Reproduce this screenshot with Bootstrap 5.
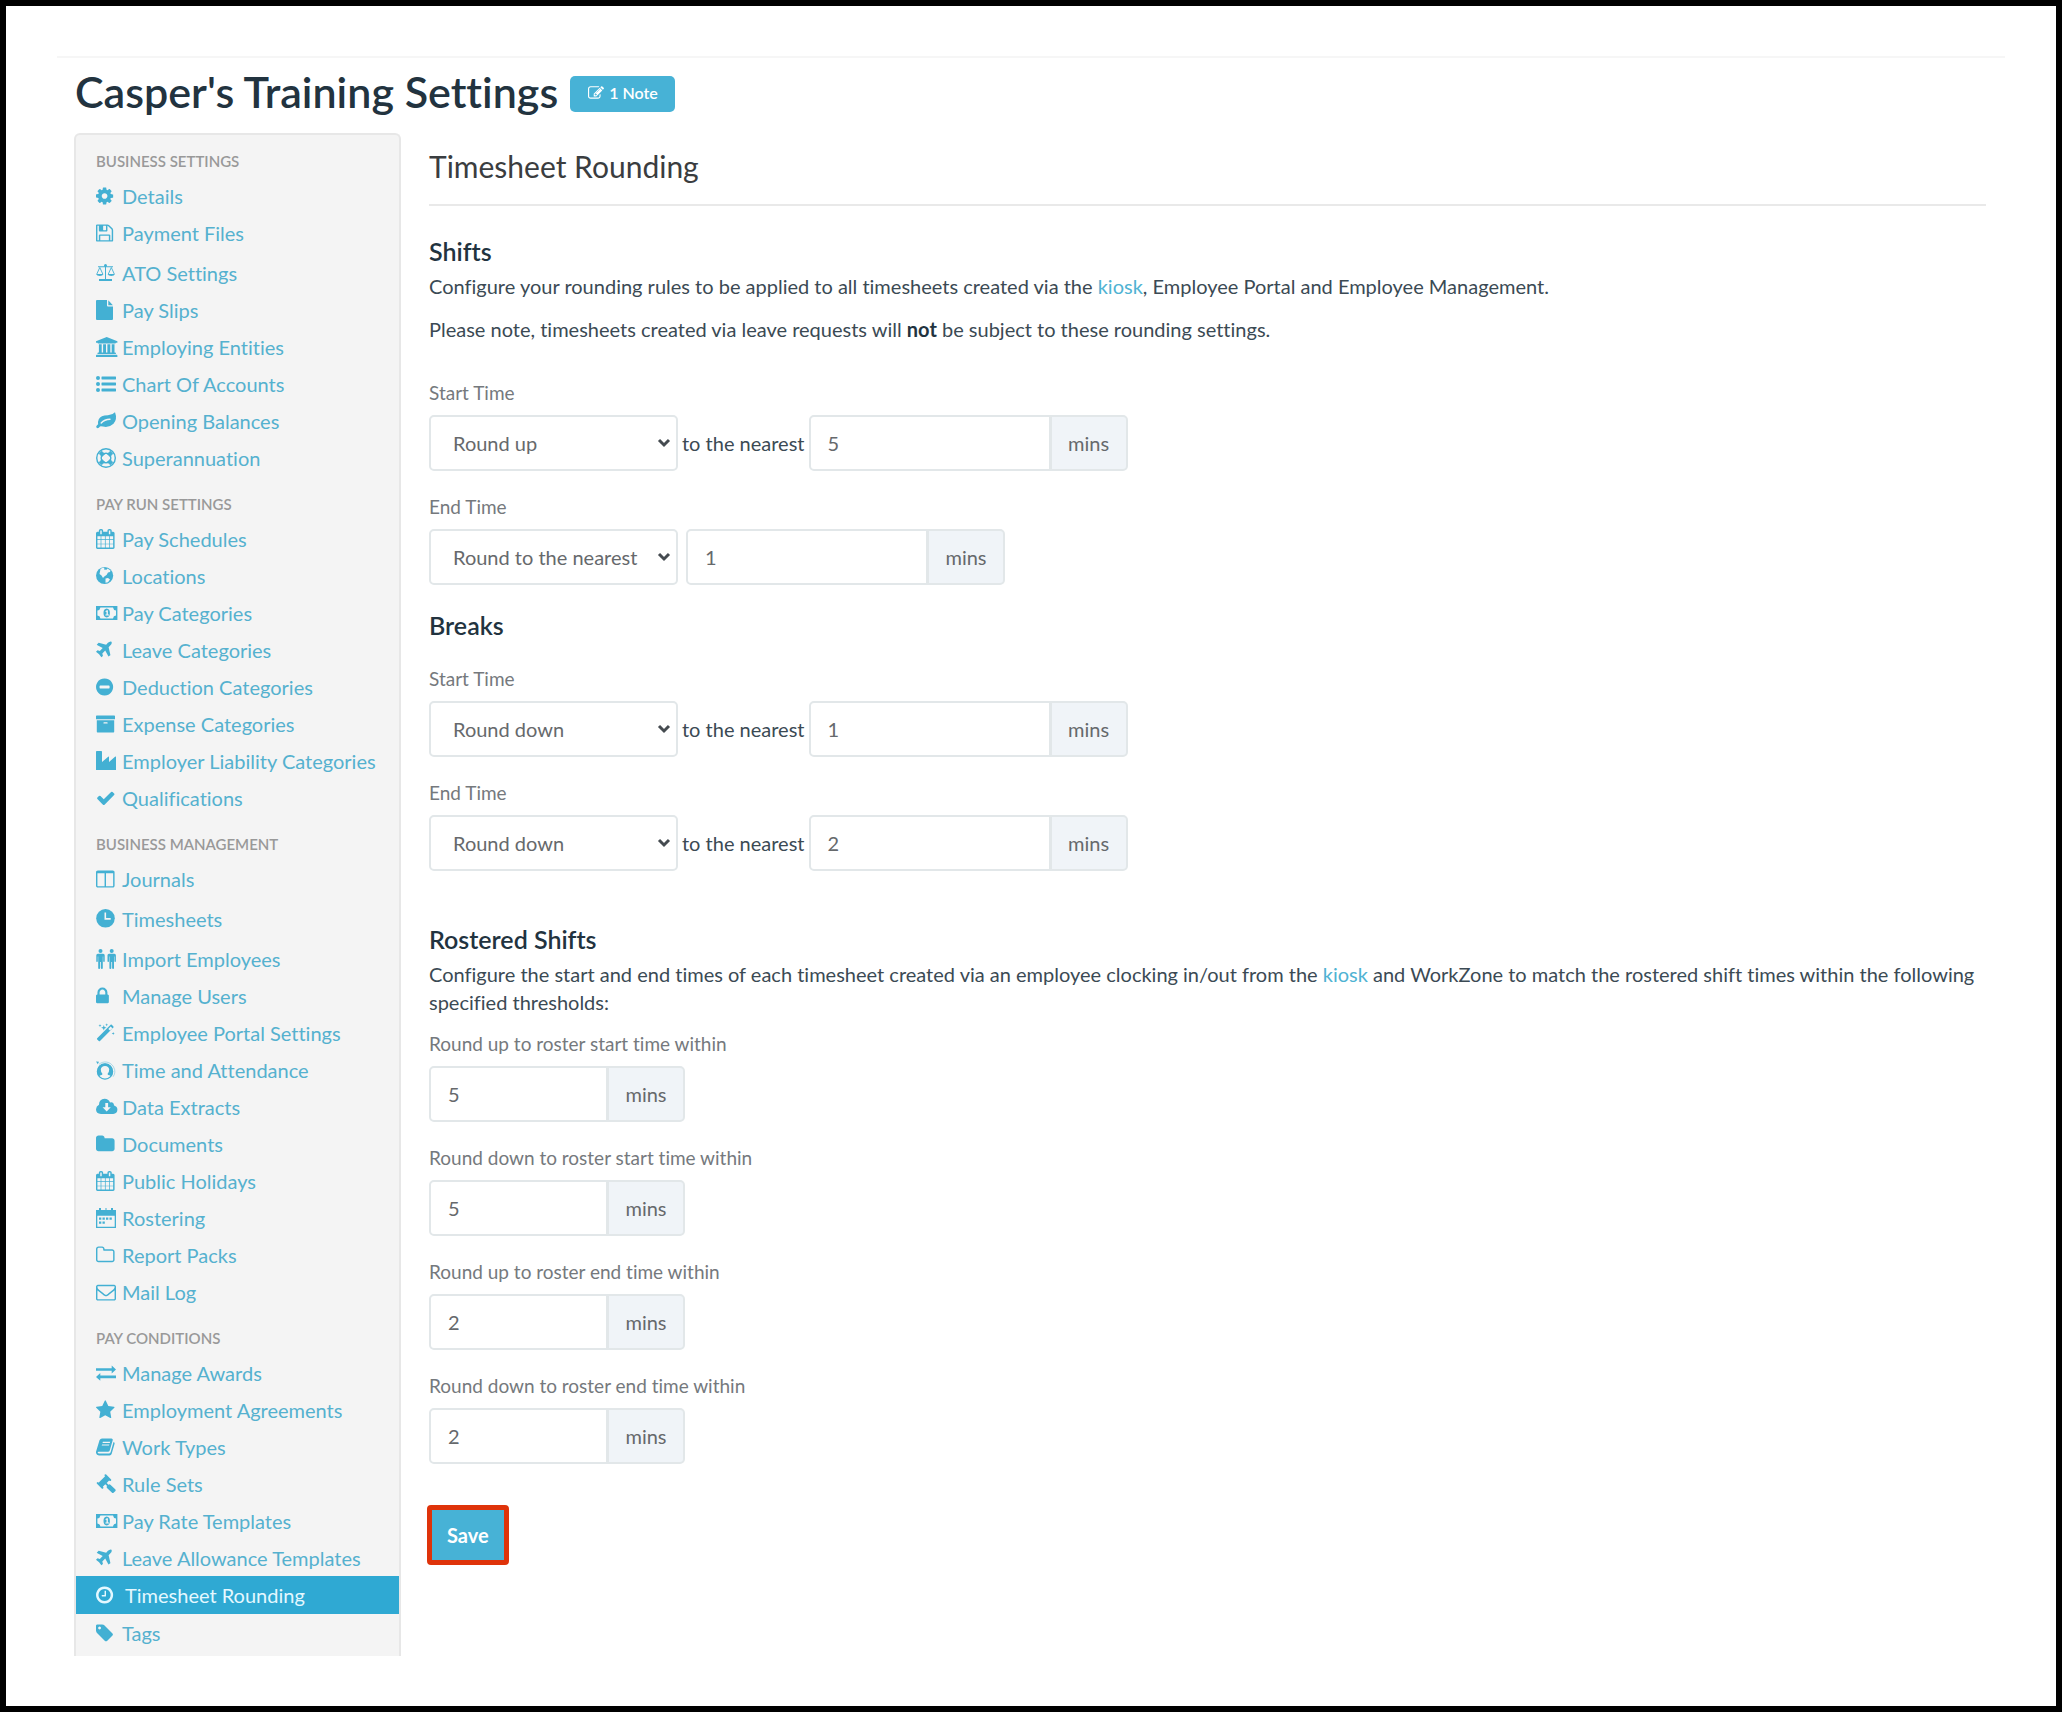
<!DOCTYPE html>
<html lang="en">
<head>
<meta charset="utf-8">
<meta name="viewport" content="width=device-width, initial-scale=1">
<title>Casper's Training Settings</title>
<link href="https://cdn.jsdelivr.net/npm/bootstrap@5.3.0/dist/css/bootstrap.min.css" rel="stylesheet">
<style>
  :root { --brand: #47b2d6; --ink: #22333f; --line: #e2e7e9; }
  body { font-family: Lato, "Liberation Sans", sans-serif; font-size: 20px; line-height: 28px; font-variant-ligatures: none; color: #3b4a54; background: #fff; border: 6px solid #000; min-height: 100vh; padding: 50px 51px 46px; }
  a { color: #4fb3d3; text-decoration: none; }
  a:hover { color: #2b8fb3; }
  .page-wrap { border-top: 2px solid #f6f6f6; padding: 11px 19px 0 18px; }
  .page-head { padding-bottom: 18px; }
  h1 { font-size: 43px; line-height: 46px; font-weight: 600; color: var(--ink); margin: 0; }
  .note-btn { background: var(--brand); color: #fff; font-size: 16px; font-weight: 600; line-height: 20px; height: 36px; padding: 0 17px 2px; border: 0; border-radius: 5px; }
  .note-btn svg { width: 18px; height: 16px; }
  .settings-nav { width: 327px; flex: none; background: #f4f4f4; border: 2px solid #e7e7e7; border-bottom: 0; border-radius: 6px 6px 0 0; padding: 10px 0 5px; margin-left: -1px; }
  .settings-nav h2 { font-size: 15px; line-height: 32px; font-weight: 600; color: #999; margin: 12px 0 0; padding-left: 20px; text-transform: uppercase; }
  .settings-nav h2:first-child { margin-top: 0; }
  .settings-nav .nav-link { display: flex; align-items: center; gap: 4px; height: 37px; padding: 0 0 0 20px; font-size: 20px; color: #55b1cf; white-space: nowrap; }
  .settings-nav .nav-link.roomy { height: 40px; padding-top: 3px; }
  .settings-nav .nav-link.active { height: 38px; gap: 7px; background: #2fa9d3; color: #e4f8ff; }
  .glyph { width: 22px; height: 20px; flex: none; fill: #43b0d3; color: #43b0d3; }
  .active .glyph { fill: #e4f8ff; }
  .sheet { padding-top: 16px; }
  .sheet h2 { font-size: 30px; line-height: 34px; font-weight: 400; color: #3a3d40; margin: 0 0 29px; padding-bottom: 21px; border-bottom: 2px solid #e9e9e9; }
  .sheet h3 { font-size: 25px; line-height: 32px; font-weight: 600; color: var(--ink); margin: 0; }
  .sheet p { margin: 0; padding-top: 5px; }
  .sheet p + p { padding-top: 15px; }
  .sheet strong { color: var(--ink); }
  .field label { display: block; font-size: 19px; color: #75797d; margin-bottom: 8px; }
  .field + .field { margin-top: 22px; }
  .after-notes { margin-top: 36px; }
  .after-intro { margin-top: 14px; }
  .form-select, .form-control, .input-group-text { height: 56px; font-size: 20px; line-height: 28px; color: #66696c; border: 2px solid var(--line); border-radius: 5px; }
  .form-control { padding: 0 17px; }
  .form-select { width: 249px; padding: 0 22px; background-position: right 5px center; background-size: 14px 10px; background-image: url("data:image/svg+xml,%3Csvg xmlns='http://www.w3.org/2000/svg' viewBox='0 0 14 10'%3E%3Cpath d='M2 2l5 5 5-5' fill='none' stroke='%23454b50' stroke-width='3'/%3E%3C/svg%3E"); }
  .input-group-text { background: #f0f4f8; width: 78px; justify-content: center; padding: 0; }
  .mins { width: 319px; }
  .mins.compact { width: 256px; }
  .save-btn { background: var(--brand); color: #fff; font-size: 20px; line-height: 28px; font-weight: 700; border: 5px solid #df330a; border-radius: 4px; padding: 11px 15px; margin: 41px 0 0 -2px; }
  .save-btn:hover, .note-btn:hover { background: #369fc3; color: #fff; border-color: #df330a; }
</style>
</head>
<body>
<svg width="0" height="0" class="d-none" aria-hidden="true">
  <symbol id="cog" viewBox="128 0 1971 1792"><path d="M1152 896q0-106-75-181t-181-75-181 75-75 181 75 181 181 75 181-75 75-181zm512-109v222q0 12-8 23t-20 13l-185 28q-19 54-39 91 35 50 107 138 10 12 10 25t-9 23q-27 37-99 108t-94 71q-12 0-26-9l-138-108q-44 23-91 38-16 136-29 186-7 28-36 28h-222q-14 0-24.500-8.500t-11.500-21.500l-28-184q-49-16-90-37l-141 107q-10 9-25 9-14 0-25-11-126-114-165-168-7-10-7-23 0-12 8-23 15-21 51-66.500t54-70.500q-27-50-41-99l-183-27q-13-2-21-12.500t-8-23.500v-222q0-12 8-23t19-13l186-28q14-46 39-92-40-57-107-138-10-12-10-24 0-10 9-23 26-36 98.500-107.500t94.500-71.500q13 0 26 10l138 107q44-23 91-38 16-136 29-186 7-28 36-28h222q14 0 24.500 8.500t11.500 21.500l28 184q49 16 90 37l142-107q9-9 24-9 13 0 25 10 129 119 165 170 7 8 7 22 0 12-8 23-15 21-51 66.500t-54 70.500q26 50 41 98l183 28q13 2 21 12.500t8 23.500z"/></symbol>
  <symbol id="floppy" viewBox="128 0 1971 1792"><path d="M512 1536h768v-384h-768v384zm896 0h128v-896q0-14-10-38.500t-20-34.500l-281-281q-10-10-34-20t-39-10v416q0 40-28 68t-68 28h-576q-40 0-68-28t-28-68v-416h-128v1280h128v-416q0-40 28-68t68-28h832q40 0 68 28t28 68v416zm-384-928v-320q0-13-9.500-22.500t-22.500-9.500h-192q-13 0-22.500 9.500t-9.500 22.500v320q0 13 9.500 22.500t22.500 9.500h192q13 0 22.500-9.500t9.500-22.500zm640 32v928q0 40-28 68t-68 28h-1344q-40 0-68-28t-28-68v-1344q0-40 28-68t68-28h928q40 0 88 20t76 48l280 280q28 28 48 76t20 88z"/></symbol>
  <symbol id="scales" viewBox="0 0 22 20"><path d="M9 2h1v15H9zM2 3.200h15v1H2zM3 16h13v2H3z"/><circle cx="9.500" cy="2.500" r="1.500"/><path d="M0 11h7.500q-.8 2-3.700 2T0 11zM11.500 11H19q-.8 2-3.700 2t-3.800-2z"/><path d="M.8 11l3-6.500 3 6.500M12.300 11l3-6.500 3 6.500" fill="none" stroke="currentColor" stroke-width=".9"/></symbol>
  <symbol id="file" viewBox="0 0 22 20"><path d="M1 0h10v5.500q0 1 1 1h5V19q0 1-1 1H1q-1 0-1-1V1q0-1 1-1zM12.300.2l4.600 5H12.300z"/></symbol>
  <symbol id="bank" viewBox="0 0 22 20"><path d="M10.700 0l10.700 4.200v1.500h-1.500q0 .7-.8.7H2.300q-.8 0-.8-.7H0V4.200zM2.900 7.200h2.800v8.400h1.400V7.200h2.900v8.400h1.400V7.200h2.900v8.400h1.400V7.200h2.800v8.400h.6q.8 0 .8.700v.7H1.500v-.7q0-.7.8-.7h.6zM.8 17.800h19.800q.8 0 .8.700V20H0v-1.500q0-.7.8-.7z"/></symbol>
  <symbol id="list" viewBox="0 0 22 20"><circle cx="2" cy="4" r="2"/><circle cx="2" cy="10" r="2"/><circle cx="2" cy="16" r="2"/><rect x="5.500" y="2.600" width="14.500" height="2.900" rx=".4"/><rect x="5.500" y="8.600" width="14.500" height="2.900" rx=".4"/><rect x="5.500" y="14.600" width="14.500" height="2.900" rx=".4"/></symbol>
  <symbol id="leaf" viewBox="0 0 22 20"><path d="M19 1.200Q21.600 8 17.500 12.800 13 17 7 15.600q-2-.6-3-.2-1.200 1.600-2.300 1.800Q.2 16.800.2 15.400q.3-1 1.900-2.200Q1.500 7.500 6 5.300q2-1 6-1.100Q16.500 4 19 1.200z"/><path d="M5.200 12Q8.500 8.200 14 8.200" fill="none" stroke="#f4f4f4" stroke-width="1.400" stroke-linecap="round"/></symbol>
  <symbol id="ring" viewBox="0 0 22 20"><circle cx="10" cy="10" r="9.300" fill="none" stroke="currentColor" stroke-width="1.400"/><circle cx="10" cy="10" r="4.800" fill="none" stroke="currentColor" stroke-width="1.400"/><path d="M3.200 5.500L5.500 3.200 8.500 6 6 8.500zM14.500 3.200l2.300 2.300L14 8.500 11.500 6zM3.200 14.500l2.300 2.300L8.500 14 6 11.500zM16.800 14.500l-2.300 2.300L11.500 14 14 11.500z" stroke="currentColor"/></symbol>
  <symbol id="calendar" viewBox="64 0 1971 1792"><path d="M192 1664h288v-288h-288v288zm352 0h320v-288h-320v288zm-352-352h288v-320h-288v320zm352 0h320v-320h-320v320zm-352-384h288v-288h-288v288zm736 736h320v-288h-320v288zm-384-736h320v-288h-320v288zm768 736h288v-288h-288v288zm-384-352h320v-320h-320v320zm-352-864v-288q0-13-9.500-22.500t-22.500-9.500h-64q-13 0-22.500 9.500t-9.500 22.500v288q0 13 9.500 22.500t22.500 9.500h64q13 0 22.500-9.500t9.500-22.500zm736 864h288v-320h-288v320zm-384-384h320v-288h-320v288zm384 0h288v-288h-288v288zm32-480v-288q0-13-9.500-22.500t-22.500-9.500h-64q-13 0-22.500 9.500t-9.500 22.500v288q0 13 9.500 22.500t22.500 9.500h64q13 0 22.500-9.500t9.500-22.500zm384-64v1280q0 52-38 90t-90 38h-1408q-52 0-90-38t-38-90v-1280q0-52 38-90t90-38h128v-96q0-66 47-113t113-47h64q66 0 113 47t47 113v96h384v-96q0-66 47-113t113-47h64q66 0 113 47t47 113v96h128q52 0 90 38t38 90z"/></symbol>
  <symbol id="globe" viewBox="0 0 22 20"><circle cx="8.600" cy="9.500" r="8.600"/><path d="M4.500 3Q6.500 1.500 8.500 1.800L8 3.500l2.500.3 1-1.300 3 2-.5 1.500-2 .5-1.500 2.500-2.200 1.500L7 12 5.500 9.500 3.500 8zM9.500 12.500l2.500-.5 2 1.500-2 2.700-2.500.5z" fill="#f4f4f4"/></symbol>
  <symbol id="money" viewBox="0 0 22 20"><path fill-rule="evenodd" d="M0 3h21.400v14H0zM4.400 4.500q-.3 2.700-3 2.900v5.200q2.700.2 3 2.900H17q.3-2.700 3-2.900V7.400q-2.700-.2-3-2.900z"/><path fill-rule="evenodd" d="M10.700 5.600q3.200.3 3.200 4.400t-3.200 4.400Q7.500 14.100 7.500 10t3.200-4.400zM9.300 8.300l.7.800.5-.3v2.800H9.400v1H13v-1h-1.100V7.200h-1.100z"/></symbol>
  <symbol id="plane" viewBox="180 0 1971 1792"><path d="M1568 160q44 52 12 148t-108 172l-161 161 160 696q5 19-12 33l-128 96q-7 6-19 6-4 0-7-1-15-3-21-16l-279-508-259 259 53 194q5 17-8 31l-96 96q-9 9-23 9h-2q-15-2-24-13l-189-252-252-189q-11-7-13-23-1-13 9-25l96-97q9-9 23-9 6 0 8 1l194 53 259-259-508-279q-14-8-17-24-2-16 9-27l128-128q14-13 30-8l665 159 160-160q76-76 172-108t148 12z"/></symbol>
  <symbol id="minus" viewBox="128 0 1971 1792"><path d="M1344 960v-128q0-26-19-45t-45-19h-768q-26 0-45 19t-19 45v128q0 26 19 45t45 19h768q26 0 45-19t19-45zm320-64q0 209-103 385.500t-279.500 279.500-385.500 103-385.500-103-279.500-279.500-103-385.500 103-385.500 279.500-279.500 385.500-103 385.500 103 279.500 279.500 103 385.500z"/></symbol>
  <symbol id="archive" viewBox="0 0 22 20"><path fill-rule="evenodd" d="M.7 1.500h17.600q.7 0 .7.700v3H0v-3q0-.7.700-.7zM.8 6.300h17.400v11.500q0 .7-.7.700h-16q-.7 0-.7-.7zM8 8.200q-.6 0-.6.700t.6.700h3q.7 0 .7-.7t-.7-.7z"/></symbol>
  <symbol id="industry" viewBox="0 0 22 20"><path d="M0 19V.8Q0 0 .8 0h4.400q.8 0 .8.800V11l6.500-5.500q.5-.2.500.5v5l6.300-5.500q.7-.3.700.5V19z"/></symbol>
  <symbol id="check" viewBox="20 0 1971 1792"><path d="M1671 566q0 40-28 68l-724 724-136 136q-28 28-68 28t-68-28l-136-136-362-362q-28-28-28-68t28-68l136-136q28-28 68-28t68 28l294 295 656-657q28-28 68-28t68 28l136 136q28 28 28 68z"/></symbol>
  <symbol id="columns" viewBox="64 0 1971 1792"><path d="M224 1536h608v-1152h-640v1120q0 13 9.500 22.500t22.500 9.500zm1376-32v-1120h-640v1152h608q13 0 22.500-9.500t9.500-22.500zm128-1216v1216q0 66-47 113t-113 47h-1344q-66 0-113-47t-47-113v-1216q0-66 47-113t113-47h1344q66 0 113 47t47 113z"/></symbol>
  <symbol id="clock" viewBox="0 0 22 20"><circle cx="9.500" cy="9.300" r="9.300"/><path d="M9.300 3.500v6.400h5.400" fill="none" stroke="#f4f4f4" stroke-width="1.600"/></symbol>
  <symbol id="people" viewBox="0 0 22 20"><g id="person"><circle cx="4.500" cy="2" r="2"/><path d="M1.800 4.800h5.400q1.500 0 1.500 1.500v5.900q0 .8-.7.800t-.8-.8V7.500h-.4V19q0 .9-.9.900t-1-.9v-6h-.8v6q0 .9-1 .9t-.9-.9V7.500h-.4v4.700q0 .8-.8.800t-.7-.8V6.300q0-1.500 1.500-1.500z"/></g><use href="#person" x="11.200"/></symbol>
  <symbol id="lock" viewBox="320 0 1971 1792"><path d="M640 768h512v-192q0-106-75-181t-181-75-181 75-75 181v192zm832 96v576q0 40-28 68t-68 28h-960q-40 0-68-28t-28-68v-576q0-40 28-68t68-28h32v-192q0-184 132-316t316-132 316 132 132 316v192h32q40 0 68 28t28 68z"/></symbol>
  <symbol id="wand" viewBox="0 0 22 20"><path fill-rule="evenodd" d="M14.600 1.800q.6-.6 1.200 0l1.600 1.600q.6.600 0 1.200L4 18q-.6.600-1.200 0l-1.600-1.600q-.6-.6 0-1.200zM12.300 5.900l1.700 1.700 2.400-2.400-1.700-1.700z"/><path d="M4 1l.4 1.200 1.200.4-1.200.4L4 4.200 3.600 3l-1.200-.4 1.200-.4zM7.800 2l.7 2 2 .7-2 .7-.7 2-.7-2-2-.7 2-.7zM10.700.300l.4 1.100 1.100.4-1.100.4-.4 1.100-.4-1.100-1.100-.4 1.100-.4zM17.200 9l.4 1.100 1.100.4-1.100.4-.4 1.100-.4-1.100-1.100-.4 1.100-.4z"/></symbol>
  <symbol id="attendance" viewBox="0 0 22 20"><circle cx="9" cy="11.500" r="7.600" fill="none" stroke="currentColor" stroke-width="1.300"/><path d="M3 4.300a9.500 9.500 0 0 1 14.500 2.500q3 5.500-.5 10" fill="none" stroke="currentColor" stroke-width=".7" opacity=".6"/><path d="M0 1.500l3 .3L1.800 4.200z"/><path fill-rule="evenodd" d="M9 3.600q7.500.4 7.800 7.900 0 2.800-1.700 4.800-.6-1-2.800-1.400-.9-.3-.6-1.400 1.600-1.800 1.500-4.200Q12.800 6 9 5.900 5.200 6 4.800 9.300q-.1 2.400 1.500 4.200.3 1.100-.6 1.400-2.200.4-2.800 1.400-1.700-2-1.700-4.800Q1.500 4 9 3.600z"/></symbol>
  <symbol id="cloud" viewBox="0 0 22 20"><path fill-rule="evenodd" d="M5 17q-5-.3-5-4.700Q.2 9 3 7.800 3 2 8.600 1.700q3.900.1 5.400 3.700 3.500-1 4.100 3.100 3.300 1 3.300 4.300-.2 3.900-4.200 4.200zM9.300 6v4.200H6.600l4.100 4.400 4.100-4.400h-2.700V6z"/></symbol>
  <symbol id="folder" viewBox="64 0 1971 1792"><path d="M1728 608v704q0 92-66 158t-158 66h-1216q-92 0-158-66t-66-158v-960q0-92 66-158t158-66h320q92 0 158 66t66 158v32h672q92 0 158 66t66 158z"/></symbol>
  <symbol id="roster" viewBox="0 0 22 20"><path fill-rule="evenodd" d="M0 2h3V0h2v2h4.500V0h1v2H15V0h2v2h3v18H0zM1.300 7.800v10.900h17.400V7.800z"/><path d="M6.500 9.500h2.300v2.300H6.500zM10 9.500h2.300v2.300H10zM13.500 9.500h2.300v2.300h-2.300zM3 9.500h2.300v2.300H3zM3 13.500h2.300v2.300H3zM6.500 13.500h2.300v2.300H6.500z"/></symbol>
  <symbol id="folder-open" viewBox="64 0 1971 1792"><path d="M1600 1312v-704q0-40-28-68t-68-28h-704q-40 0-68-28t-28-68v-64q0-40-28-68t-68-28h-320q-40 0-68 28t-28 68v960q0 40 28 68t68 28h1216q40 0 68-28t28-68zm128-704v704q0 92-66 158t-158 66h-1216q-92 0-158-66t-66-158v-960q0-92 66-158t158-66h320q92 0 158 66t66 158v32h672q92 0 158 66t66 158z"/></symbol>
  <symbol id="mail" viewBox="0 0 1971 1792"><path d="M1664 1504v-768q-32 36-69 66-268 206-426 338-51 43-83 67t-86.500 48.500-102.500 24.500h-2q-48 0-102.500-24.500t-86.500-48.500-83-67q-158-132-426-338-37-30-69-66v768q0 13 9.500 22.500t22.500 9.500h1472q13 0 22.500-9.500t9.500-22.500zm0-1051v-24.500l-.5-13-3-12.500-5.500-9-9-7.500-14-2.500h-1472q-13 0-22.500 9.500t-9.500 22.500q0 168 147 284 193 152 401 317 6 5 35 29.500t46 37.500 44.500 31.500 50.500 27.500 43 9h2q20 0 43-9t50.500-27.500 44.500-31.500 46-37.500 35-29.500q208-165 401-317 54-43 100.500-115.500t46.500-131.500zm128-37v1088q0 66-47 113t-113 47h-1472q-66 0-113-47t-47-113v-1088q0-66 47-113t113-47h1472q66 0 113 47t47 113z"/></symbol>
  <symbol id="exchange" viewBox="0 0 22 20"><path d="M0 5.200h15.700V2.600l4.300 3.900-4.300 3.900V7.800H0zM20 12.600H4.300V10L0 13.900l4.300 3.900v-2.600H20z"/></symbol>
  <symbol id="star" viewBox="64 0 1971 1792"><path d="M1728 647q0 22-26 48l-363 354 86 500q1 7 1 20 0 21-10.500 35.500t-30.500 14.500q-19 0-40-12l-449-236-449 236q-22 12-40 12-21 0-31.500-14.500t-10.500-35.500q0-6 2-20l86-500-364-354q-25-27-25-48 0-37 56-46l502-73 225-455q19-41 49-41t49 41l225 455 502 73q56 9 56 46z"/></symbol>
  <symbol id="book" viewBox="0 0 22 20"><path fill-rule="evenodd" d="M6 1.400h9.500q1.600.2 1.200 1.900l-2.900 9.900q-.4 1.500-2 1.500H2.500q-1 .1-.8.800.2.900 1.500.9h10q1 0 1.400-1.100L17.500 5q1.500.5 1 2l-2.800 9.700q-.5 1.700-2.200 1.700H3Q.5 18.300 0 16q-.1-1.400.4-2.400L3.500 3.300Q4.300 1.500 6 1.400zM6.900 4.700l-.4 1.200h7.300l.4-1.200zM6.100 7.400l-.4 1.200H13l.4-1.200z"/></symbol>
  <symbol id="gavel" viewBox="0 0 22 20"><path d="M8.800.6q.7-.7 1.400 0l4.700 4.700q.7.700 0 1.400t-1.400 0l-.4-.2-2.400 2.400 1.800 1.800q.9-.9 1.900 0l4.800 4.500q1 1 0 2l-1.400 1.400q-1 1-2 0L11 13.900q-.8-1 .1-1.900L9.300 10.200l-2.500 2.500.3.400q.7.700 0 1.400t-1.400 0L1 9.800q-.7-.7 0-1.400t1.400 0l.4.200 6.300-6.300-.3-.4q-.6-.6 0-1.300z"/></symbol>
  <symbol id="clock-o" viewBox="128 0 1971 1792"><path d="M1024 544v448q0 14-9 23t-23 9h-320q-14 0-23-9t-9-23v-64q0-14 9-23t23-9h224v-352q0-14 9-23t23-9h64q14 0 23 9t9 23zm416 352q0-148-73-273t-198-198-273-73-273 73-198 198-73 273 73 273 198 198 273 73 273-73 198-198 73-273zm224 0q0 209-103 385.500t-279.500 279.500-385.500 103-385.500-103-279.500-279.500-103-385.500 103-385.500 279.500-279.500 385.500-103 385.500 103 279.500 279.500 103 385.500z"/></symbol>
  <symbol id="tag" viewBox="128 0 1971 1792"><path d="M576 448q0-53-37.500-90.500t-90.500-37.500-90.500 37.500-37.500 90.500 37.500 90.500 90.500 37.500 90.500-37.500 37.500-90.500zm1067 576q0 53-37 90l-491 492q-39 37-91 37-53 0-90-37l-715-716q-38-37-64.500-101t-26.500-117v-416q0-52 38-90t90-38h416q53 0 117 26.500t102 64.500l715 714q37 39 37 91z"/></symbol>
  <symbol id="edit" viewBox="0 0 1792 1792"><path d="M888 1184l116-116-152-152-116 116v56h96v96h56zm440-720q-16-16-33 1l-350 350q-17 17-1 33t33-1l350-350q17-17 1-33zm80 594v190q0 119-84.500 203.500t-203.500 84.500h-832q-119 0-203.500-84.500t-84.500-203.500v-832q0-119 84.500-203.500t203.500-84.500h832q63 0 117 25 15 7 18 23 3 17-9 29l-49 49q-14 14-32 8-23-6-45-6h-832q-66 0-113 47t-47 113v832q0 66 47 113t113 47h832q66 0 113-47t47-113v-126q0-13 9-22l64-64q15-15 35-7t20 29zm-96-738l288 288-672 672h-288v-288zm444 132l-92 92-288-288 92-92q28-28 68-28t68 28l152 152q28 28 28 68t-28 68z"/></symbol>
</svg>

<div class="page-wrap">
  <header class="page-head d-flex align-items-center gap-2">
    <h1>Casper's Training Settings</h1>
    <button type="button" class="btn note-btn d-inline-flex align-items-center ms-1 mt-1"><svg fill="currentColor" aria-hidden="true"><use href="#edit"/></svg><span class="ms-1">1 Note</span></button>
  </header>

  <div class="d-flex align-items-start">
    <nav class="settings-nav nav flex-column flex-nowrap" aria-label="Settings">
      <h2>Business Settings</h2>
      <a class="nav-link" href="#"><svg class="glyph"><use href="#cog"/></svg>Details</a>
      <a class="nav-link" href="#"><svg class="glyph"><use href="#floppy"/></svg>Payment Files</a>
      <a class="nav-link roomy" href="#"><svg class="glyph"><use href="#scales"/></svg>ATO Settings</a>
      <a class="nav-link" href="#"><svg class="glyph"><use href="#file"/></svg>Pay Slips</a>
      <a class="nav-link" href="#"><svg class="glyph"><use href="#bank"/></svg>Employing Entities</a>
      <a class="nav-link" href="#"><svg class="glyph"><use href="#list"/></svg>Chart Of Accounts</a>
      <a class="nav-link" href="#"><svg class="glyph"><use href="#leaf"/></svg>Opening Balances</a>
      <a class="nav-link" href="#"><svg class="glyph"><use href="#ring"/></svg>Superannuation</a>
      <h2>Pay Run Settings</h2>
      <a class="nav-link" href="#"><svg class="glyph"><use href="#calendar"/></svg>Pay Schedules</a>
      <a class="nav-link" href="#"><svg class="glyph"><use href="#globe"/></svg>Locations</a>
      <a class="nav-link" href="#"><svg class="glyph"><use href="#money"/></svg>Pay Categories</a>
      <a class="nav-link" href="#"><svg class="glyph"><use href="#plane"/></svg>Leave Categories</a>
      <a class="nav-link" href="#"><svg class="glyph"><use href="#minus"/></svg>Deduction Categories</a>
      <a class="nav-link" href="#"><svg class="glyph"><use href="#archive"/></svg>Expense Categories</a>
      <a class="nav-link" href="#"><svg class="glyph"><use href="#industry"/></svg>Employer Liability Categories</a>
      <a class="nav-link" href="#"><svg class="glyph"><use href="#check"/></svg>Qualifications</a>
      <h2>Business Management</h2>
      <a class="nav-link" href="#"><svg class="glyph"><use href="#columns"/></svg>Journals</a>
      <a class="nav-link roomy" href="#"><svg class="glyph"><use href="#clock"/></svg>Timesheets</a>
      <a class="nav-link roomy" href="#"><svg class="glyph"><use href="#people"/></svg>Import Employees</a>
      <a class="nav-link" href="#"><svg class="glyph"><use href="#lock"/></svg>Manage Users</a>
      <a class="nav-link" href="#"><svg class="glyph"><use href="#wand"/></svg>Employee Portal Settings</a>
      <a class="nav-link" href="#"><svg class="glyph"><use href="#attendance"/></svg>Time and Attendance</a>
      <a class="nav-link" href="#"><svg class="glyph"><use href="#cloud"/></svg>Data Extracts</a>
      <a class="nav-link" href="#"><svg class="glyph"><use href="#folder"/></svg>Documents</a>
      <a class="nav-link" href="#"><svg class="glyph"><use href="#calendar"/></svg>Public Holidays</a>
      <a class="nav-link" href="#"><svg class="glyph"><use href="#roster"/></svg>Rostering</a>
      <a class="nav-link" href="#"><svg class="glyph"><use href="#folder-open"/></svg>Report Packs</a>
      <a class="nav-link" href="#"><svg class="glyph"><use href="#mail"/></svg>Mail Log</a>
      <h2>Pay Conditions</h2>
      <a class="nav-link" href="#"><svg class="glyph"><use href="#exchange"/></svg>Manage Awards</a>
      <a class="nav-link" href="#"><svg class="glyph"><use href="#star"/></svg>Employment Agreements</a>
      <a class="nav-link" href="#"><svg class="glyph"><use href="#book"/></svg>Work Types</a>
      <a class="nav-link" href="#"><svg class="glyph"><use href="#gavel"/></svg>Rule Sets</a>
      <a class="nav-link" href="#"><svg class="glyph"><use href="#money"/></svg>Pay Rate Templates</a>
      <a class="nav-link" href="#"><svg class="glyph"><use href="#plane"/></svg>Leave Allowance Templates</a>
      <a class="nav-link active" aria-current="page" href="#"><svg class="glyph"><use href="#clock-o"/></svg>Timesheet Rounding</a>
      <a class="nav-link" href="#"><svg class="glyph"><use href="#tag"/></svg>Tags</a>
    </nav>

    <main class="sheet flex-grow-1 ms-4 ps-1">
      <h2>Timesheet Rounding</h2>
      <form>
        <section>
          <h3>Shifts</h3>
          <p>Configure your rounding rules to be applied to all timesheets created via the <a href="#">kiosk</a>, Employee Portal and Employee Management.</p>
          <p>Please note, timesheets created via leave requests will <strong>not</strong> be subject to these rounding settings.</p>
          <div class="field after-notes">
            <label for="shift-start">Start Time</label>
            <div class="d-flex align-items-center gap-1">
              <select id="shift-start" class="form-select"><option>Round up</option><option>Round down</option><option>Round to the nearest</option></select>
              <span>to the nearest</span>
              <div class="input-group mins"><input type="text" class="form-control" value="5" aria-label="Shift start minutes"><span class="input-group-text">mins</span></div>
            </div>
          </div>
          <div class="field">
            <label for="shift-end">End Time</label>
            <div class="d-flex align-items-center gap-1">
              <select id="shift-end" class="form-select"><option>Round to the nearest</option><option>Round up</option><option>Round down</option></select>
              <div class="input-group mins ms-1"><input type="text" class="form-control" value="1" aria-label="Shift end minutes"><span class="input-group-text">mins</span></div>
            </div>
          </div>
        </section>
        <section class="pt-4">
          <h3>Breaks</h3>
          <div class="field mt-4">
            <label for="break-start">Start Time</label>
            <div class="d-flex align-items-center gap-1">
              <select id="break-start" class="form-select"><option>Round down</option><option>Round up</option><option>Round to the nearest</option></select>
              <span>to the nearest</span>
              <div class="input-group mins"><input type="text" class="form-control" value="1" aria-label="Break start minutes"><span class="input-group-text">mins</span></div>
            </div>
          </div>
          <div class="field">
            <label for="break-end">End Time</label>
            <div class="d-flex align-items-center gap-1">
              <select id="break-end" class="form-select"><option>Round down</option><option>Round up</option><option>Round to the nearest</option></select>
              <span>to the nearest</span>
              <div class="input-group mins"><input type="text" class="form-control" value="2" aria-label="Break end minutes"><span class="input-group-text">mins</span></div>
            </div>
          </div>
        </section>
        <section class="pt-5">
          <h3 class="pt-1">Rostered Shifts</h3>
          <p>Configure the start and end times of each timesheet created via an employee clocking in/out from the <a href="#">kiosk</a> and WorkZone to match the rostered shift times within the following specified thresholds:</p>
          <div class="field after-intro">
            <label for="up-start">Round up to roster start time within</label>
            <div class="input-group mins compact"><input id="up-start" type="text" class="form-control" value="5"><span class="input-group-text">mins</span></div>
          </div>
          <div class="field">
            <label for="down-start">Round down to roster start time within</label>
            <div class="input-group mins compact"><input id="down-start" type="text" class="form-control" value="5"><span class="input-group-text">mins</span></div>
          </div>
          <div class="field">
            <label for="up-end">Round up to roster end time within</label>
            <div class="input-group mins compact"><input id="up-end" type="text" class="form-control" value="2"><span class="input-group-text">mins</span></div>
          </div>
          <div class="field">
            <label for="down-end">Round down to roster end time within</label>
            <div class="input-group mins compact"><input id="down-end" type="text" class="form-control" value="2"><span class="input-group-text">mins</span></div>
          </div>
        </section>
        <button type="submit" class="btn save-btn">Save</button>
      </form>
    </main>
  </div>
</div>
<script src="https://cdn.jsdelivr.net/npm/bootstrap@5.3.0/dist/js/bootstrap.bundle.min.js"></script>
</body>
</html>
